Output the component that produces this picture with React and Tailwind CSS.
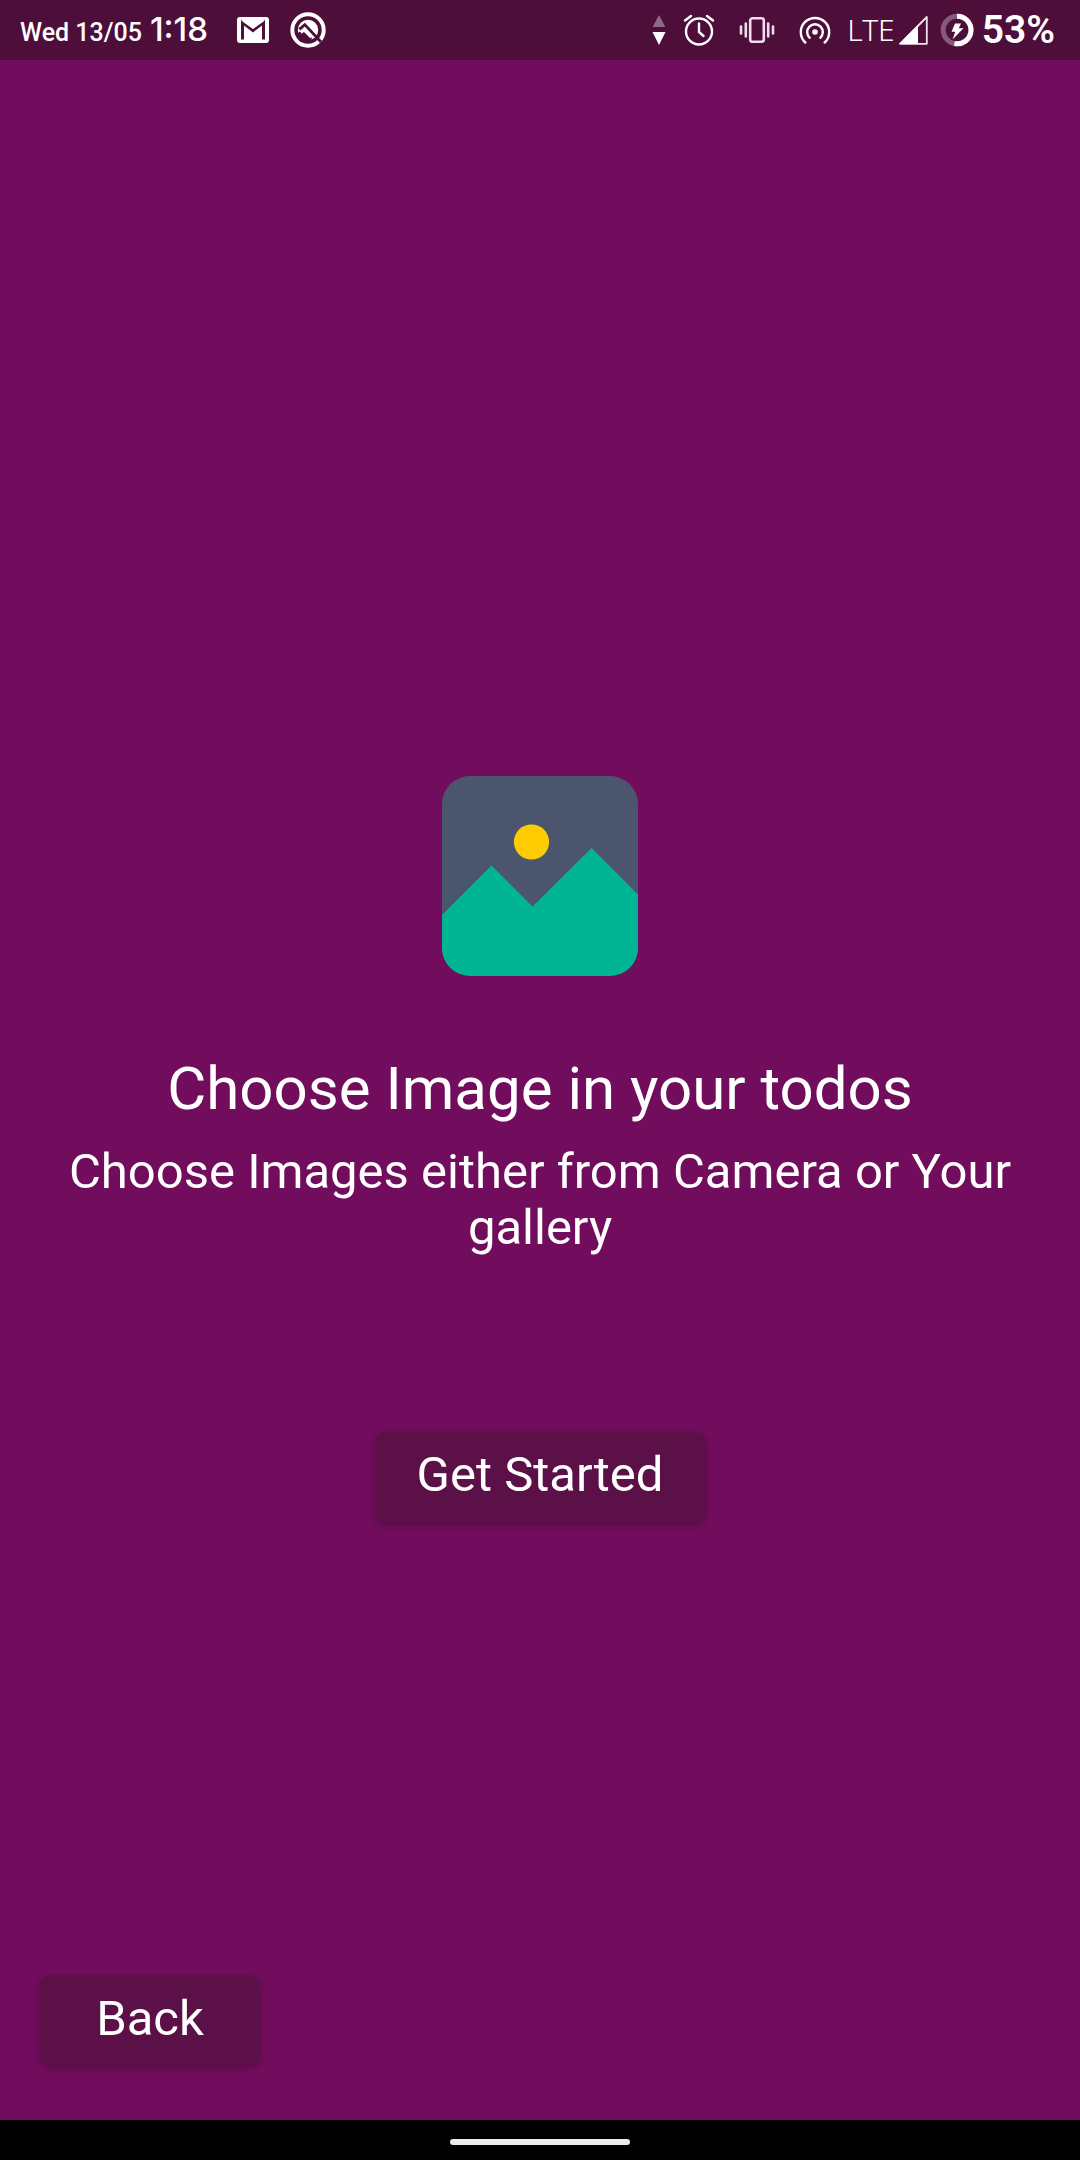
import React from "react";

function GmailIcon() {
  return (
    <svg width="32" height="26" viewBox="0 0 32 26" aria-hidden="true">
      <rect width="32" height="26" rx="3" fill="#fff" />
      <path d="M5.5 22.5V5.5L16 13.5L26.5 5.5V22.5" fill="none" stroke="#4d0e3a" strokeWidth="3" />
      <path d="M4 3.5L16 12L28 3.5Z" fill="#fff" />
    </svg>
  );
}

function SearchBadgeIcon() {
  return (
    <svg width="36" height="36" viewBox="0 0 36 36" fill="none" aria-hidden="true">
      <circle cx="18" cy="18" r="15.7" stroke="#fff" strokeWidth="4" />
      <circle cx="18" cy="18" r="10.2" fill="#fff" />
      <path d="M7 22L13 16.5L22 26L20 30H10Z" fill="#4d0e3a" />
      <path d="M10.6 20.4L14 17.4L21.6 25" stroke="#fff" strokeWidth="3.6" />
      <path d="M9.4 17.4L14.8 12.6L31 30" stroke="#4d0e3a" strokeWidth="2.8" />
    </svg>
  );
}

function DataArrowsIcon() {
  return (
    <svg width="14" height="32" viewBox="0 0 14 32" aria-hidden="true">
      <path d="M7 1L13.3 13H0.7Z" fill="#fff" fillOpacity="0.38" />
      <path d="M0.5 18H13.5L7 31Z" fill="#fff" />
    </svg>
  );
}

function AlarmIcon() {
  return (
    <svg width="32" height="32" viewBox="0 0 32 32" fill="none" stroke="#fff" strokeWidth="2.4" strokeLinecap="round" aria-hidden="true">
      <circle cx="16" cy="17.5" r="13" />
      <path d="M16 9.5V18L20.5 22M2 6.5L8 2M30 6.5L24 2" />
    </svg>
  );
}

function VibrateIcon() {
  return (
    <svg width="36" height="28" viewBox="0 0 36 28" fill="none" stroke="#f0dcea" strokeWidth="2.6" strokeLinecap="round" aria-hidden="true">
      <rect x="11.2" y="2.2" width="13.6" height="23.6" rx="2.4" />
      <path d="M6.8 7.5V20.5M2 10.5V17.5M29.2 7.5V20.5M34 10.5V17.5" />
    </svg>
  );
}

function HotspotIcon() {
  return (
    <svg width="32" height="28" viewBox="0 0 32 28" fill="none" stroke="#fff" strokeWidth="2.4" strokeLinecap="round" aria-hidden="true">
      <path d="M6.3 26.5A14.2 14.2 0 1 1 25.7 26.5" />
      <path d="M10.7 21.8A7.8 7.8 0 1 1 21.3 21.8" />
      <circle cx="16" cy="16" r="2.8" fill="#fff" stroke="none" />
    </svg>
  );
}

function SignalIcon() {
  return (
    <svg width="30" height="30" viewBox="0 0 30 30" aria-hidden="true">
      <path d="M2 28.8L28.8 2V28.8Z" fill="none" stroke="#f4e3ef" strokeWidth="1.8" strokeLinejoin="round" />
      <path d="M1 29L20 10V29Z" fill="#fff" />
    </svg>
  );
}

function BatteryIcon() {
  return (
    <svg width="34" height="34" viewBox="0 0 34 34" fill="none" aria-hidden="true">
      <circle cx="17" cy="17" r="13.8" stroke="#fff" strokeOpacity="0.32" strokeWidth="5" />
      <path d="M17 3.2A13.8 13.8 0 1 1 14.4 30.5" stroke="#fff" strokeWidth="5" />
      <path d="M15 10.5H21L18.8 15.3H23.5L12.5 26.5L15.3 18.8H11.5Z" fill="#fff" />
    </svg>
  );
}

function StatusBar() {
  return (
    <header className="flex h-[60px] items-center justify-between bg-[#4d0e3a] pr-[25px] pl-5 text-white">
      <div className="flex items-center">
        <div className="flex w-[190px] items-baseline gap-2 whitespace-nowrap">
          <span className="text-[25px] font-medium">Wed 13/05</span>
          <span className="font-[Inter,sans-serif] text-[33px] font-medium">1:18</span>
        </div>
        <div className="ml-[27px] flex items-center gap-[21px]">
          <GmailIcon />
          <SearchBadgeIcon />
        </div>
      </div>
      <div className="flex items-center">
        <div className="mr-4 flex items-center gap-[24px]">
          <div className="flex items-center gap-[17px]">
            <DataArrowsIcon />
            <AlarmIcon />
          </div>
          <VibrateIcon />
          <HotspotIcon />
        </div>
        <span className="mr-[3px] font-['Noto_Sans',sans-serif] text-[30px] leading-9 font-light">LTE</span>
        <div className="mr-2 flex items-center gap-3">
          <SignalIcon />
          <BatteryIcon />
        </div>
        <span className="text-[39px] leading-10 font-semibold">53%</span>
      </div>
    </header>
  );
}

function PictureIcon() {
  return (
    <svg width="196" height="200" viewBox="0 0 196 200" role="img" aria-label="Picture">
      <defs>
        <clipPath id="frame">
          <rect width="196" height="200" rx="28" />
        </clipPath>
      </defs>
      <g clipPath="url(#frame)">
        <rect width="196" height="200" fill="#4b566e" />
        <circle cx="89.5" cy="66" r="17.6" fill="#ffcc03" />
        <path d="M0 139L49.5 89.5L90.5 130.5L149.5 72L196 118.5V200H0Z" fill="#00b594" />
      </g>
    </svg>
  );
}

function ActionButton({ children, className }) {
  return (
    <button
      type="button"
      className={`${className} h-[90px] rounded-[10px] bg-[#5c1048] pb-[3px] text-[49px] text-white shadow-[0_3px_6px_rgba(0,0,0,0.22)]`}
    >
      {children}
    </button>
  );
}

export default function App() {
  return (
    <div className="flex min-h-screen flex-col bg-[#710d5c] font-[Roboto,sans-serif] text-white">
      <StatusBar />
      <main className="flex flex-1 flex-col items-center justify-center px-[60px] pt-[262px] text-center">
        <PictureIcon />
        <h1 className="mt-[78px] text-[60px] leading-[70px]">Choose Image in your todos</h1>
        <p className="mt-5 text-[49px] leading-[56px]">
          Choose Images either from Camera or Your gallery
        </p>
        <ActionButton className="mt-[176px] w-[331px]">Get Started</ActionButton>
      </main>
      <footer className="flex px-10 pb-[55px]">
        <ActionButton className="w-[220px]">Back</ActionButton>
      </footer>
      <div className="flex h-10 items-center justify-center bg-black pt-1">
        <div className="h-1.5 w-[180px] rounded-full bg-[#ebebeb]" />
      </div>
    </div>
  );
}
